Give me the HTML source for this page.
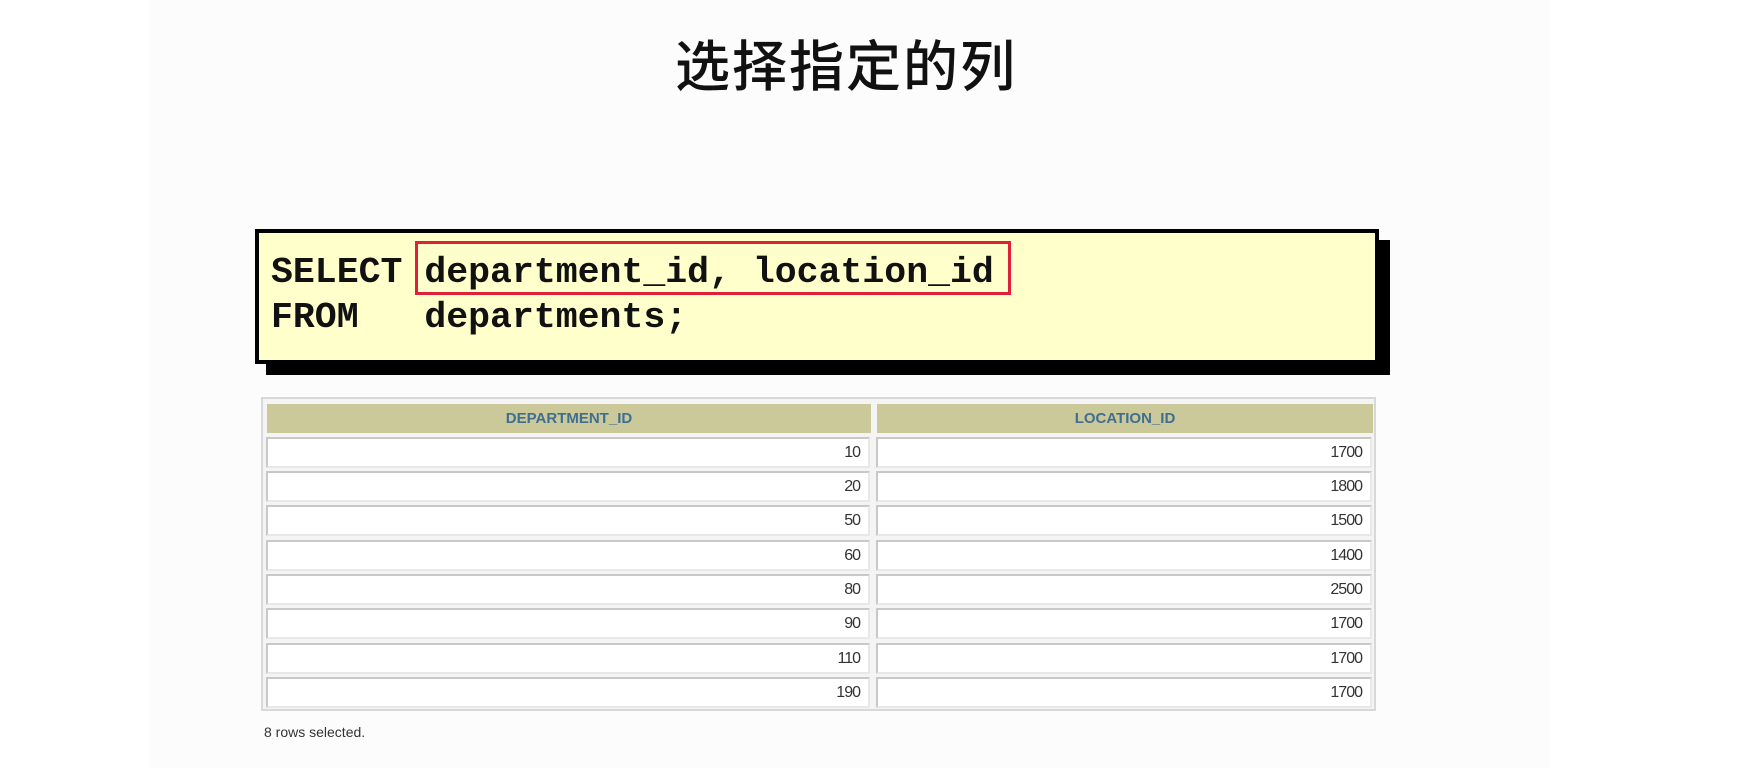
<!DOCTYPE html>
<html><head><meta charset="utf-8"><style>
*{margin:0;padding:0;box-sizing:border-box}
body{width:1740px;height:768px;background:#fff;position:relative;overflow:hidden;font-family:"Liberation Sans",sans-serif}
.slide{position:absolute;left:150px;top:0;width:1400px;height:768px;background:#fcfcfc}
h1{position:absolute;left:0;width:1692px;top:22px;text-align:center;font:500 55px "Noto Sans CJK SC",sans-serif;color:#111;letter-spacing:2px}
.shadow{position:absolute;left:266px;top:240px;width:1124px;height:135px;background:#000}
.code{position:absolute;left:255px;top:229px;width:1124px;height:135px;background:#ffffcc;border:4px solid #000}
.code pre{position:absolute;left:12px;top:17px;font:bold 36.5px/45px "Liberation Mono",monospace;color:#111}
.red{position:absolute;left:415px;top:241px;width:596px;height:54px;border:3px solid #e0203a}
.tbl{position:absolute;left:261px;top:397px;width:1115px;height:314px;border:2px solid #d8d8d8;background:#f4f4f4}
.cell{position:absolute;background:#fff;border:2px solid #c8c8c8;border-right-color:#e8e8e8;border-bottom-color:#e8e8e8;font:16px "Liberation Sans",sans-serif;color:#333;text-align:right;padding-right:8px;line-height:28px;letter-spacing:-1px}
.hd{position:absolute;top:5px;height:29px;background:#cbc89a;color:#3f6f90;font:bold 15px/29px "Liberation Sans",sans-serif;text-align:center}
.foot{position:absolute;left:264px;top:724px;font:14px "Liberation Sans",sans-serif;color:#333}
</style></head><body>
<div class="slide"></div>
<h1>选择指定的列</h1>
<div class="shadow"></div>
<div class="code"><pre>SELECT department_id, location_id
FROM   departments;</pre></div>
<div class="red"></div>
<div class="tbl">
<div class="hd" style="left:4px;width:604px">DEPARTMENT_ID</div>
<div class="hd" style="left:614px;width:496px">LOCATION_ID</div>
</div>
<div style="position:absolute;left:0;top:0">
<div class="cell" style="left:266px;top:437px;width:604px;height:31px">10</div><div class="cell" style="left:876px;top:437px;width:496px;height:31px">1700</div>
<div class="cell" style="left:266px;top:471px;width:604px;height:31px">20</div><div class="cell" style="left:876px;top:471px;width:496px;height:31px">1800</div>
<div class="cell" style="left:266px;top:505px;width:604px;height:31px">50</div><div class="cell" style="left:876px;top:505px;width:496px;height:31px">1500</div>
<div class="cell" style="left:266px;top:540px;width:604px;height:31px">60</div><div class="cell" style="left:876px;top:540px;width:496px;height:31px">1400</div>
<div class="cell" style="left:266px;top:574px;width:604px;height:31px">80</div><div class="cell" style="left:876px;top:574px;width:496px;height:31px">2500</div>
<div class="cell" style="left:266px;top:608px;width:604px;height:31px">90</div><div class="cell" style="left:876px;top:608px;width:496px;height:31px">1700</div>
<div class="cell" style="left:266px;top:643px;width:604px;height:31px">110</div><div class="cell" style="left:876px;top:643px;width:496px;height:31px">1700</div>
<div class="cell" style="left:266px;top:677px;width:604px;height:31px">190</div><div class="cell" style="left:876px;top:677px;width:496px;height:31px">1700</div>
</div>
<div class="foot">8 rows selected.</div>
</body></html>
